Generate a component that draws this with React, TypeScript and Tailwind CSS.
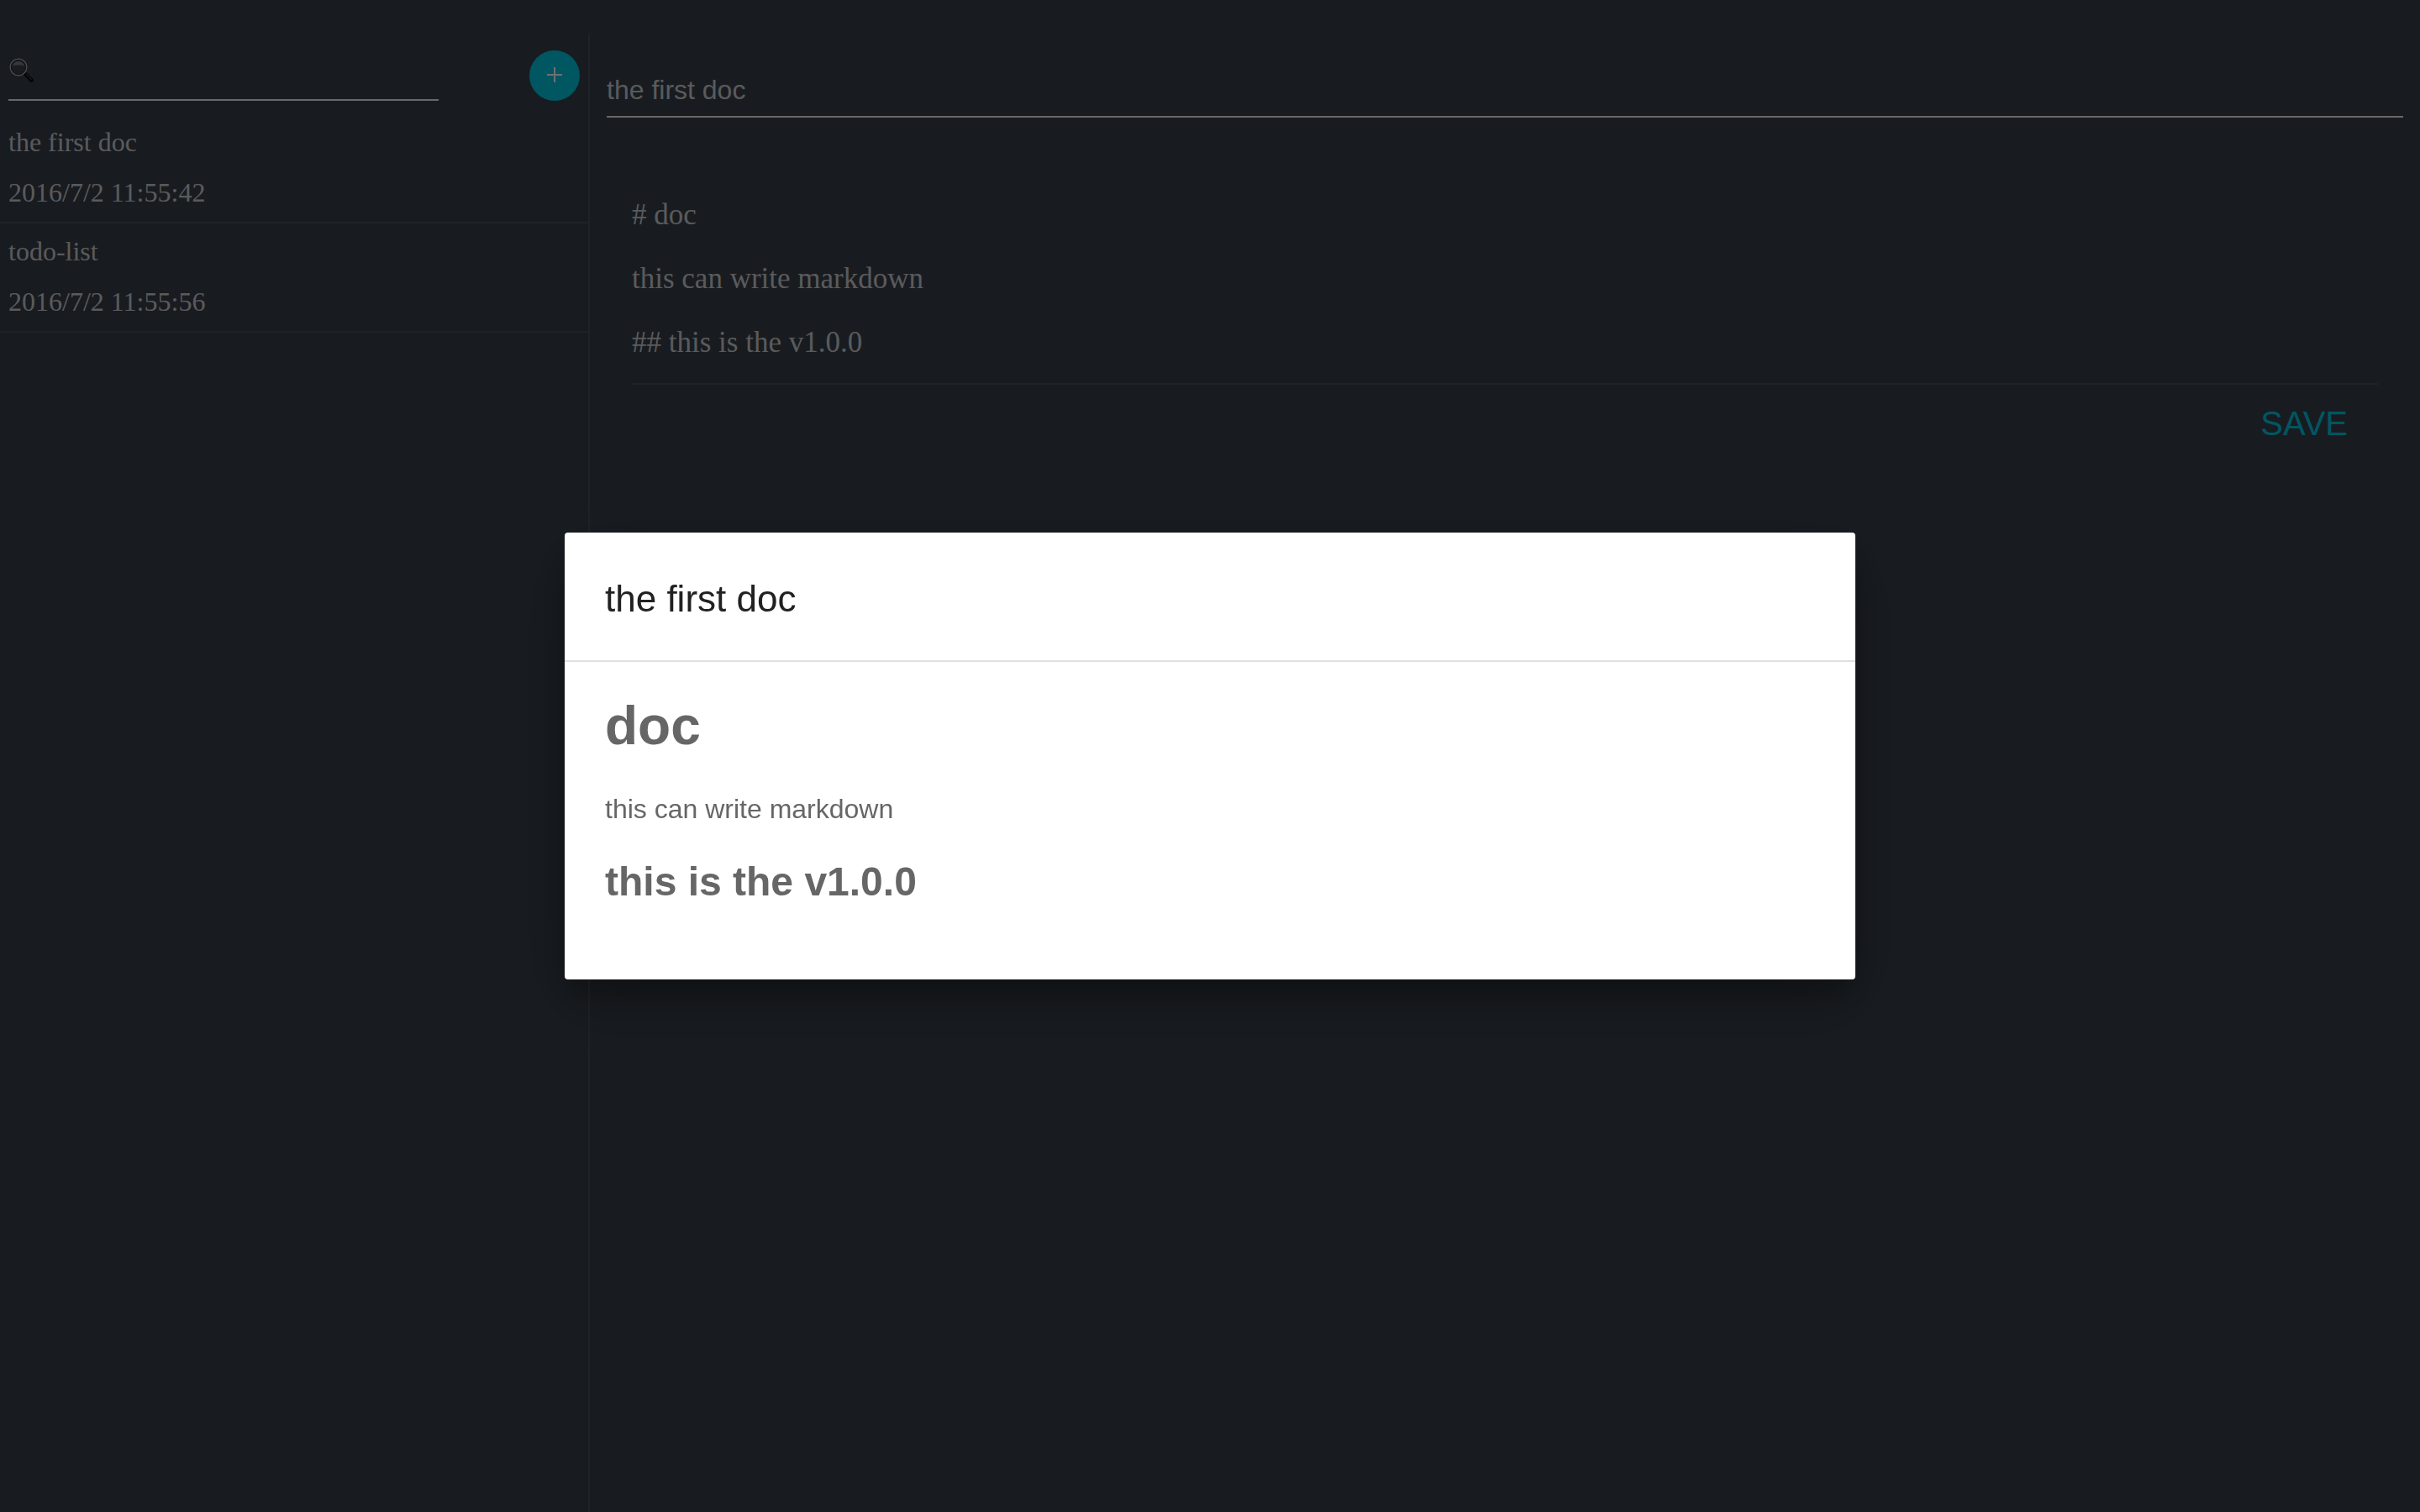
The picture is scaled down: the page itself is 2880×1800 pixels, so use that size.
import { useState } from "react";

type Doc = { title: string; time: string; body: string };

const docs: Doc[] = [
  {
    title: "the first doc",
    time: "2016/7/2 11:55:42",
    body: "# doc\n\nthis can write markdown\n\n## this is the v1.0.0",
  },
  { title: "todo-list", time: "2016/7/2 11:55:56", body: "" },
];

function SearchIcon() {
  return (
    <svg viewBox="0 0 30 30" className="pointer-events-none absolute left-px top-[9px] size-[30px]" aria-hidden="true">
      <defs>
        <linearGradient id="lens-shine" x1="0" y1="0" x2="0" y2="1">
          <stop offset="0" stopColor="#7c8086" />
          <stop offset="1" stopColor="#6c7076" />
        </linearGradient>
      </defs>
      <path d="M17 17 L19.5 19.5" stroke="#777" strokeWidth="2" />
      <path d="M19.6 19.6 L26.6 26.6" stroke="#0a0a0a" strokeWidth="4.6" strokeLinecap="round" />
      <path d="M20.2 19.4 L26.4 25.6" stroke="#555" strokeWidth="1" strokeLinecap="round" />
      <circle cx="11" cy="11" r="9.8" fill="none" stroke="#a4a4a4" strokeWidth="1.4" />
      <circle cx="11" cy="11" r="8.6" fill="none" stroke="#23272d" strokeWidth="1" />
      <path d="M4 9.6 A7.3 7.3 0 0 1 18 9.6 Q11 7.2 4 9.6Z" fill="url(#lens-shine)" />
    </svg>
  );
}

function Sidebar() {
  return (
    <aside className="w-[702px] shrink-0 border-r-2 border-[#464d52]">
      <div className="flex items-center justify-between pt-5 pr-2.5 pb-4 pl-2.5">
        <div className="relative w-[512px]">
          <SearchIcon />
          <input
            type="search"
            aria-label="Search documents"
            className="block h-[60px] w-full border-b-2 border-[#e4e4e4] bg-transparent pl-10 text-[32px] outline-none"
          />
        </div>
        <button
          type="button"
          aria-label="New document"
          className="flex size-[60px] items-center justify-center rounded-full bg-[#00bcd4]"
        >
          <svg viewBox="0 0 20 20" className="size-5" aria-hidden="true">
            <path d="M10 0V18M1 9H19" stroke="#f4f4f4" strokeWidth="2" />
          </svg>
        </button>
      </div>
      <ul>
        {docs.map((doc) => (
          <li key={doc.title} className="border-b-2 border-[#464d52]">
            <button
              type="button"
              className="block w-full px-2.5 pt-[3px] pb-[5px] text-left font-['Liberation_Serif',serif] text-[32px] leading-[60px]"
            >
              <span className="block">{doc.title}</span>
              <time className="block">{doc.time}</time>
            </button>
          </li>
        ))}
      </ul>
    </aside>
  );
}

function Editor() {
  const [title, setTitle] = useState(docs[0].title);
  const [body, setBody] = useState(docs[0].body);
  return (
    <main className="min-w-0 flex-1 px-5 pt-9">
      <input
        type="text"
        aria-label="Title"
        value={title}
        onChange={(e) => setTitle(e.target.value)}
        className="block h-16 w-full border-b-2 border-[#e4e0e0] bg-transparent text-[32px] outline-none"
      />
      <div className="mt-[97px] px-[30px]">
        <textarea
          aria-label="Document text"
          rows={5}
          value={body}
          onChange={(e) => setBody(e.target.value)}
          className="block w-full resize-none overflow-hidden border-b-2 border-[#464d52] bg-transparent pb-[29px] font-['Liberation_Serif',serif] text-[35px] leading-[38px] outline-none"
        />
        <div className="mt-2.5 flex justify-end">
          <button type="button" className="h-[72px] px-9 text-[40px] text-[#00bcd4]">
            SAVE
          </button>
        </div>
      </div>
    </main>
  );
}

function PreviewDialog() {
  return (
    <div className="fixed inset-0 flex items-center justify-center bg-[rgba(0,0,0,0.54)]">
      <section
        role="dialog"
        aria-modal="true"
        aria-labelledby="preview-title"
        className="w-3/4 max-w-[1536px] rounded-sm bg-white text-[#666666] shadow-[0_28px_90px_rgba(0,0,0,0.25),0_20px_36px_rgba(0,0,0,0.22)]"
      >
        <h3
          id="preview-title"
          className="border-b-2 border-[#e0e0e0] px-12 pt-[47px] pb-[41px] text-[44px] leading-[64px] text-[#212121]"
        >
          the first doc
        </h3>
        <div className="px-12 pt-10 pb-[88px]">
          <h1 className="text-[64px] leading-[72px] font-bold">doc</h1>
          <p className="mt-[45px] text-[32px] leading-[36px]">this can write markdown</p>
          <h2 className="mt-[41px] text-[48px] leading-[56px] font-bold">this is the v1.0.0</h2>
        </div>
      </section>
    </div>
  );
}

export default function App() {
  return (
    <div className="flex min-h-screen bg-[#363d47] pt-10 font-['Liberation_Sans',Arial,sans-serif] text-[#c5c5c9]">
      <Sidebar />
      <Editor />
      <PreviewDialog />
    </div>
  );
}
